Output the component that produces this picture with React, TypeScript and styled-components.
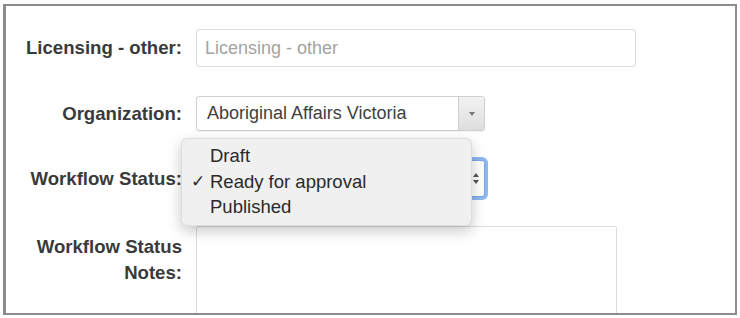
import React from 'react'
import styled, { createGlobalStyle } from 'styled-components'

const GlobalStyle = createGlobalStyle`
  html, body {
    margin: 0;
    padding: 0;
    background: #fff;
  }
  body {
    font-family: 'Liberation Sans', Arial, Helvetica, sans-serif;
  }
`

const Frame = styled.div`
  margin: 4px 0 0 3px;
  width: 729px;
  height: 307px;
  border: 2px solid #8c8c8c;
  border-left-width: 3px;
  background: #fff;
  overflow: hidden;
`

const Form = styled.div`
  display: grid;
  grid-template-columns: 176px 1fr;
  column-gap: 14px;
  row-gap: 29px;
  padding-top: 23px;
`

const Label = styled.label<{ $top?: boolean }>`
  font-size: 18.6px;
  font-weight: bold;
  color: #3a3a3a;
  text-align: right;
  line-height: 26px;
  white-space: nowrap;
  align-self: ${({ $top }) => ($top ? 'start' : 'center')};
  padding-top: ${({ $top }) => ($top ? '8px' : '0')};
`

const TextInput = styled.input`
  box-sizing: border-box;
  width: 440px;
  height: 38px;
  border: 1px solid #dcdcdc;
  border-radius: 3px;
  padding: 0 8px;
  font-family: inherit;
  font-size: 18px;
  color: #444;
  outline: none;
  &::placeholder {
    color: #a3a3a3;
  }
`

const SelectBox = styled.div<{ $width: number; $focused?: boolean }>`
  position: relative;
  box-sizing: border-box;
  width: ${({ $width }) => $width}px;
  height: ${({ $focused }) => ($focused ? 37 : 35)}px;
  display: flex;
  align-items: stretch;
  border: 1px solid ${({ $focused }) => ($focused ? '#7aa7e6' : '#cfcfcf')};
  border-radius: 3px;
  background: #fff;
  box-shadow: ${({ $focused }) => ($focused ? '0 0 0 3px #8db8f0' : '0 1px 1px rgba(0,0,0,0.06)')};
  font-size: 18px;
  color: #404040;
`

const SelectValue = styled.div`
  flex: 1;
  display: flex;
  align-items: center;
  padding-left: 10px;
  white-space: nowrap;
`

const ArrowCell = styled.div`
  width: 25px;
  border-left: 1px solid #cfcfcf;
  background: linear-gradient(#f2f2f2, #dedede);
  display: flex;
  align-items: center;
  justify-content: center;
  border-radius: 0 2px 2px 0;
`

const Caret = styled.div`
  width: 0;
  height: 0;
  border-left: 3px solid transparent;
  border-right: 3px solid transparent;
  border-top: 4px solid #777;
  margin-top: 1px;
`

const Stepper = styled.div`
  width: 16px;
  display: flex;
  align-items: center;
  justify-content: center;
`

const Menu = styled.div`
  position: absolute;
  left: -16px;
  top: -23px;
  width: 291px;
  box-sizing: border-box;
  padding: 4px 0 5px;
  background: #f0f0f0;
  border: 1px solid rgba(0, 0, 0, 0.08);
  border-radius: 6px;
  box-shadow: 0 5px 14px rgba(0, 0, 0, 0.22);
  z-index: 10;
`

const MenuItem = styled.div`
  position: relative;
  height: 25.5px;
  line-height: 25.5px;
  padding-left: 28px;
  font-size: 18.5px;
  color: #2a2a2a;
`

const Check = styled.span`
  position: absolute;
  left: 9px;
  top: 0;
  font-size: 17px;
  color: #2a2a2a;
`

const TextArea = styled.textarea`
  box-sizing: border-box;
  width: 421px;
  height: 110px;
  border: 1px solid #dcdcdc;
  border-radius: 2px;
  resize: none;
  outline: none;
  font-family: inherit;
  font-size: 18px;
`

const options = ['Draft', 'Ready for approval', 'Published']

export default function App() {
  const selected = 'Ready for approval'
  return (
    <>
      <GlobalStyle />
      <Frame>
        <Form>
          <Label>Licensing - other:</Label>
          <div>
            <TextInput placeholder="Licensing - other" />
          </div>

          <Label>Organization:</Label>
          <div>
            <SelectBox $width={289}>
              <SelectValue>Aboriginal Affairs Victoria</SelectValue>
              <ArrowCell>
                <Caret />
              </ArrowCell>
            </SelectBox>
          </div>

          <Label>Workflow Status:</Label>
          <div>
            <SelectBox $width={289} $focused>
              {/* the open menu covers the current value */}
              <SelectValue />
              <Stepper>
                <svg width="8" height="13" viewBox="0 0 8 13">
                  <path d="M4 1 L7 5 H1 Z" fill="#555" />
                  <path d="M4 12 L7 8 H1 Z" fill="#555" />
                </svg>
              </Stepper>
              <Menu>
                {options.map((o) => (
                  <MenuItem key={o}>
                    {o === selected && <Check>✓</Check>}
                    {o}
                  </MenuItem>
                ))}
              </Menu>
            </SelectBox>
          </div>

          <Label $top>
            Workflow Status
            <br />
            Notes:
          </Label>
          <div>
            <TextArea />
          </div>
        </Form>
      </Frame>
    </>
  )
}
